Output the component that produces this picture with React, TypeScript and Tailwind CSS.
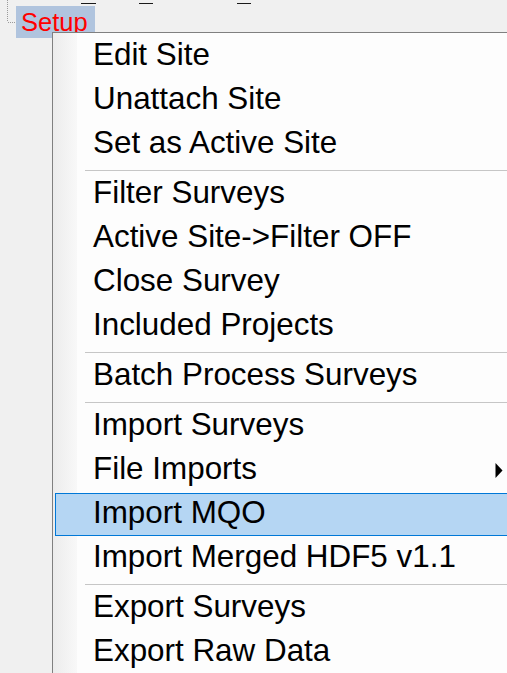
import React from 'react';

type Entry = { label: string; sub?: boolean; active?: boolean } | 'sep';

const entries: Entry[] = [
  { label: 'Edit Site' },
  { label: 'Unattach Site' },
  { label: 'Set as Active Site' },
  'sep',
  { label: 'Filter Surveys' },
  { label: 'Active Site->Filter OFF' },
  { label: 'Close Survey' },
  { label: 'Included Projects' },
  'sep',
  { label: 'Batch Process Surveys' },
  'sep',
  { label: 'Import Surveys' },
  { label: 'File Imports', sub: true },
  { label: 'Import MQO', active: true },
  { label: 'Import Merged HDF5 v1.1' },
  'sep',
  { label: 'Export Surveys' },
  { label: 'Export Raw Data' },
];

const MenuRow: React.FC<{ label: string; sub?: boolean; active?: boolean }> = ({ label, sub, active }) => {
  if (active) {
    return (
      <div className="h-[44px] relative">
        <div className="absolute left-[2px] -right-[2px] top-[2px] h-[43px] border border-[#0078d7] bg-[#b5d6f3]" />
        <div className="relative h-[44px] leading-[44px] pl-[40px] text-black whitespace-nowrap">{label}</div>
      </div>
    );
  }
  return (
    <div className="h-[44px] leading-[44px] pl-[40px] text-black whitespace-nowrap flex items-center">
      <span className="flex-1">{label}</span>
      {sub && (
        <svg width="8" height="15" viewBox="0 0 8 15" className="shrink-0 mr-[4px] mt-[2px]">
          <path d="M0.5 0 L7.5 7.5 L0.5 15 Z" fill="#000" />
        </svg>
      )}
    </div>
  );
};

export default function App() {
  return (
    <div className="w-[507px] h-[673px] bg-[#f0f0f0] relative overflow-hidden font-['Liberation_Sans',Arial,sans-serif]">
      <div className="flex">
        <svg width="16" height="38" className="shrink-0">
          <line x1="7.5" y1="0" x2="7.5" y2="22" stroke="#9a9a9a" strokeWidth="1" strokeDasharray="1 1" />
          <line x1="8" y1="22.5" x2="16" y2="22.5" stroke="#9a9a9a" strokeWidth="1" strokeDasharray="1 1" />
        </svg>
        <div className="flex flex-col">
          <div className="h-[6px] flex items-start pt-[3px]">
            <div className="ml-[65px] w-[15px] h-px bg-[#1a1a1a]" />
            <div className="ml-[43px] w-[14px] h-px bg-[#1a1a1a]" />
            <div className="ml-[84px] w-[14px] h-px bg-[#1a1a1a]" />
          </div>
          <div className="w-[79px] h-[32px] bg-[#b0c4de] text-[#ff0000] text-[25.5px] leading-[32px] pl-[5px]">
            Setup
          </div>
        </div>
      </div>

      <div className="absolute left-[52px] top-[32px] w-[455px] border-l border-t border-[#808080] bg-[linear-gradient(to_right,#ececec_0px,#f8f8f8_24px,#fdfdfd_24px)] text-[31.4px] pb-[20px]">
        {entries.map((e, i) =>
          e === 'sep' ? (
            <div key={i} className="h-[6px] pt-[5px] pl-[32px]">
              <div className="h-px bg-[#c6c6c6]" />
            </div>
          ) : (
            <MenuRow key={i} label={e.label} sub={e.sub} active={e.active} />
          )
        )}
      </div>
    </div>
  );
}
